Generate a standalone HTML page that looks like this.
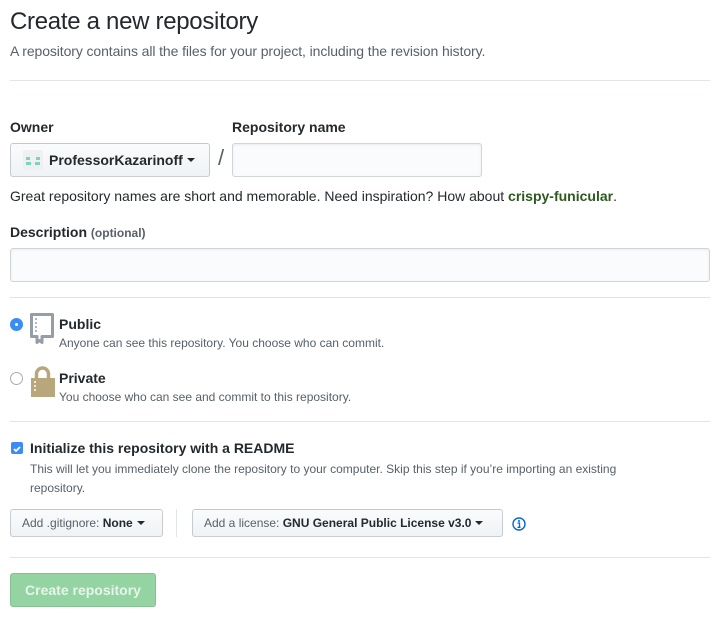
<!DOCTYPE html>
<html><head><style>
*{box-sizing:border-box;margin:0;padding:0}
body{width:724px;height:617px;background:#fff;font-family:"Liberation Sans",sans-serif;color:#24292e;position:relative;overflow:hidden}
.a{position:absolute;white-space:nowrap}
.hr{position:absolute;left:10px;width:700px;height:1px;background:#e1e4e8}
.btn{position:absolute;border:1px solid rgba(27,31,35,.2);border-radius:3px;background:linear-gradient(#fafbfc,#eff3f6);font-size:12px;display:flex;align-items:center}
.caret{display:inline-block;width:0;height:0;border-left:4px solid transparent;border-right:4px solid transparent;border-top:4px solid #24292e;margin-left:4px;vertical-align:middle}
.inp{position:absolute;border:1px solid #d1d5da;border-radius:3px;background:#fafbfc;box-shadow:inset 0 1px 2px rgba(27,31,35,.075)}
b{font-weight:bold}
</style></head><body>
<div class="a" style="left:10px;top:8px;font-size:24px;letter-spacing:-0.3px">Create a new repository</div>
<div class="a" style="left:10px;top:43px;font-size:14px;color:#586069;letter-spacing:-0.1px">A repository contains all the files for your project, including the revision history.</div>
<div class="hr" style="top:80px"></div>
<div class="a" style="left:10px;top:119px;font-size:14px;font-weight:bold">Owner</div>
<div class="a" style="left:232px;top:119px;font-size:14px;font-weight:bold">Repository name</div>
<div class="btn" style="left:10px;top:143px;width:200px;height:34px;font-size:14px;font-weight:bold;padding-left:12px">
<svg width="20" height="20" style="margin-right:6px"><rect width="20" height="20" rx="2" fill="#f0f0f0"/><rect x="3" y="7" width="4" height="3" fill="#7bd3c0"/><rect x="13" y="7" width="4" height="3" fill="#7bd3c0"/><rect x="3" y="12" width="5" height="3" fill="#7bd3c0"/><rect x="12" y="12" width="5" height="3" fill="#7bd3c0"/></svg>ProfessorKazarinoff<span class="caret"></span></div>
<div class="a" style="left:218px;top:145px;font-size:22px;color:#586069">/</div>
<div class="inp" style="left:232px;top:143px;width:250px;height:34px"></div>
<div class="a" style="left:10px;top:188px;font-size:14px">Great repository names are short and memorable. Need inspiration? How about <b style="color:#2c5a1d">crispy-funicular</b>.</div>
<div class="a" style="left:10px;top:224px;font-size:14px;font-weight:bold">Description <span style="font-size:12px;color:#586069">(optional)</span></div>
<div class="inp" style="left:10px;top:248px;width:700px;height:34px"></div>
<div class="hr" style="top:297px"></div>
<div class="a" style="left:10px;top:318px;width:13px;height:13px;border-radius:50%;background:#3b8cf5"><div style="position:absolute;left:5px;top:5px;width:3px;height:3px;border-radius:50%;background:#fff"></div></div>
<svg class="a" style="left:30px;top:313px" width="25" height="32"><path d="M1.5 1.5h21v22H12v6l-2.5-2-2.5 2v-6H1.5z" fill="none" stroke="#959da5" stroke-width="3" stroke-linejoin="round"/><path d="M6 5v2M6 9v2M6 13v2M6 17v2" stroke="#959da5" stroke-width="1.5"/></svg>
<div class="a" style="left:59px;top:316px;font-size:14px;font-weight:bold">Public</div>
<div class="a" style="left:59px;top:336px;font-size:12px;color:#586069">Anyone can see this repository. You choose who can commit.</div>
<div class="a" style="left:10px;top:372px;width:13px;height:13px;border-radius:50%;border:1px solid #aaa;background:#fff"></div>
<svg class="a" style="left:30px;top:366px" width="25" height="31"><path d="M6.5 13V8a6 6 0 0 1 12 0v5" fill="none" stroke="#b8a77a" stroke-width="3.5"/><rect x="1" y="12" width="24" height="19" fill="#b8a77a"/><path d="M5 15v2M5 19v2M5 23v2" stroke="#fff" stroke-width="1.5"/></svg>
<div class="a" style="left:59px;top:370px;font-size:14px;font-weight:bold">Private</div>
<div class="a" style="left:59px;top:390px;font-size:12px;color:#586069">You choose who can see and commit to this repository.</div>
<div class="hr" style="top:421px"></div>
<div class="a" style="left:11px;top:442px;width:12px;height:12px;border-radius:2px;background:#3b8cf5"><svg width="12" height="12"><path d="M3 6l2 2 4-4" stroke="#fff" stroke-width="1.8" fill="none"/></svg></div>
<div class="a" style="left:30px;top:440px;font-size:14px;font-weight:bold">Initialize this repository with a README</div>
<div class="a" style="left:30px;top:460px;font-size:12px;color:#586069;line-height:19px;white-space:normal;width:640px">This will let you immediately clone the repository to your computer. Skip this step if you’re importing an existing repository.</div>
<div class="btn" style="left:10px;top:509px;width:153px;height:28px;padding-left:11px"><span style="color:#586069">Add .gitignore:&nbsp;</span><b>None</b><span class="caret"></span></div>
<div class="a" style="left:176px;top:509px;width:1px;height:28px;background:#e1e4e8"></div>
<div class="btn" style="left:192px;top:509px;width:311px;height:28px;padding-left:11px"><span style="color:#586069">Add a license:&nbsp;</span><b>GNU General Public License v3.0</b><span class="caret"></span></div>
<svg class="a" style="left:512px;top:517px" width="14" height="14"><circle cx="7" cy="7" r="6" fill="none" stroke="#0366d6" stroke-width="1.4"/><circle cx="7" cy="4" r="1" fill="#0366d6"/><path d="M5.5 6h2v4M5.5 10.3h3" stroke="#0366d6" stroke-width="1.3" fill="none"/></svg>
<div class="hr" style="top:557px"></div>
<div class="a" style="left:10px;top:573px;width:146px;height:34px;border-radius:3px;background:#94d3a2;border:1px solid rgba(27,31,35,.1);font-size:14px;font-weight:bold;display:flex;align-items:center;justify-content:center;color:#e6f5e9">Create repository</div>
</body></html>
